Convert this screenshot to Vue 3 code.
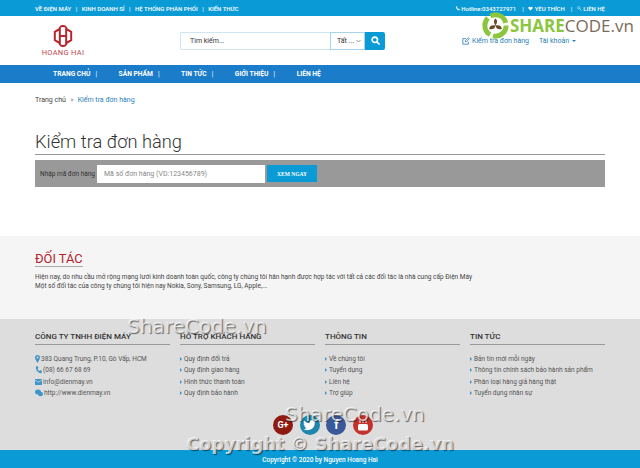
<template>
  <div class="page">
    <div class="topbar">
      <div class="wrap topbar-in">
        <div class="toplinks">
          <a v-for="(t, i) in topLeft" :key="t" :class="{ sep: i < topLeft.length - 1 }">{{ t }}</a>
        </div>
        <div class="toplinks right">
          <a class="sep">
            <svg class="ic" viewBox="0 0 10 10"><path d="M2 1l1.5-.5L5 3 4 4c.4 1 1 1.600 2 2l1-1 2.500 1.500L9 8c-.5 1-2 1-4-.5S1 3.500 2 1z" fill="#fff" /></svg>
            Hotline:0343727971
          </a>
          <a class="sep">
            <svg class="ic" viewBox="0 0 10 10"><path d="M5 9L1 5c-1-1.500 0-3.500 1.800-3.500C4 1.500 4.600 2 5 3c.4-1 1-1.500 2.200-1.500C9 1.500 10 3.500 9 5z" fill="#fff" /></svg>
            YÊU THÍCH
          </a>
          <a>
            <svg class="ic" viewBox="0 0 10 10"><circle cx="3.500" cy="3.500" r="2.500" fill="none" stroke="#fff" /><path d="M5 5l4 4M7 7l1-1" stroke="#fff" fill="none" /></svg>
            LIÊN HỆ
          </a>
        </div>
      </div>
    </div>

    <header class="wrap head">
      <div class="logo">
        <svg width="20" height="22" viewBox="0 0 22 24" fill="none" stroke="#b5262e" stroke-width="2.200">
          <path d="M7 4.500L2 7.500v9L7 19.500M15 4.500l5 3v9l-5 3M7.500 2v20M14.500 2v20M7.500 12h7M7.500 2L11 .8 14.500 2M7.500 22l3.500 1.200 3.500-1.200" />
        </svg>
        <span class="logo-name">HOANG HAI</span>
      </div>
      <div class="search">
        <div class="search-input">Tìm kiếm...</div>
        <div class="search-cat">
          Tất ...
          <svg width="5" height="4" viewBox="0 0 5 4"><path d="M.5 1l2 2 2-2" fill="none" stroke="#777" stroke-width=".8" /></svg>
        </div>
        <button class="search-btn">
          <svg width="9" height="9" viewBox="0 0 10 10" fill="none" stroke="#fff" stroke-width="1.800"><circle cx="4.200" cy="4.200" r="3" /><path d="M6.500 6.500L9.500 9.500" /></svg>
        </button>
      </div>
      <div class="account">
        <a>
          <svg width="8" height="8" viewBox="0 0 10 10" fill="none" stroke="#2a7fb8"><path d="M8 6v3H1V2h4" /><path d="M4 6l.3-1.500L8 1l1.200 1.200-3.500 3.500z" /></svg>
          Kiểm tra đơn hàng
        </a>
        <a>Tài khoản <i class="caret"></i></a>
      </div>
    </header>

    <nav class="nav">
      <div class="wrap nav-in">
        <a v-for="(t, i) in navItems" :key="t" :class="{ sep: i < navItems.length - 1 }">{{ t }}</a>
      </div>
    </nav>

    <main class="wrap main">
      <div class="crumb">Trang chủ <span class="gt">»</span> <span class="cur">Kiểm tra đơn hàng</span></div>
      <h1 class="title">Kiểm tra đơn hàng</h1>
      <div class="check">
        <label>Nhập mã đơn hàng</label>
        <div class="check-input">Mã số đơn hàng (VD:123456789)</div>
        <button class="check-btn">XEM NGAY</button>
      </div>
    </main>

    <section class="partner">
      <div class="wrap">
        <h2>ĐỐI TÁC</h2>
        <p>Hiện nay, do nhu cầu mở rộng mạng lưới kinh doanh toàn quốc, công ty chúng tôi hân hạnh được hợp tác với tất cả các đối tác là nhà cung cấp Điện Máy</p>
        <p>Một số đối tác của công ty chúng tôi hiện nay Nokia, Sony, Samsung, LG, Apple,...</p>
      </div>
    </section>

    <footer class="foot">
      <div class="wrap cols">
        <div class="col">
          <h3>CÔNG TY TNHH ĐIỆN MÁY</h3>
          <ul>
            <li v-for="c in contacts" :key="c.text">
              <svg class="cic" :width="c.w" height="8" :viewBox="`0 0 ${c.w} 8`" v-html="c.icon"></svg>{{ c.text }}
            </li>
          </ul>
        </div>
        <div v-for="col in linkCols" :key="col.title" class="col">
          <h3>{{ col.title }}</h3>
          <ul>
            <li v-for="l in col.links" :key="l"><i class="arrow"></i>{{ l }}</li>
          </ul>
        </div>
      </div>
      <div class="social">
        <span class="soc gp">G+</span>
        <span class="soc tw">
          <svg width="13" height="11" viewBox="0 0 13 11"><path d="M13 1.300c-.5.200-1 .4-1.500.4.500-.3 1-.8 1.200-1.400-.5.300-1 .5-1.700.7C10.500.4 9.800 0 9 0 7.300 0 6.100 1.500 6.500 3.200 4.300 3.100 2.300 2 1 .4.300 1.600.6 3.100 1.700 3.900c-.4 0-.8-.1-1.200-.3 0 1.200.9 2.300 2.100 2.600-.4.100-.8.100-1.200 0 .3 1 1.300 1.800 2.500 1.800C2.800 8.900 1.400 9.300 0 9.100 4 11.700 12 10 11.700 2.700c.5-.3 1-.8 1.300-1.400z" fill="#fff" /></svg>
        </span>
        <span class="soc fb">f</span>
        <span class="soc yt">
          <svg width="12" height="12" viewBox="0 0 12 12"><rect x="1" y="5" width="10" height="6.500" rx="1.500" fill="#fff" /><path d="M3 1v3M6 1v3M9 1v3" stroke="#fff" /></svg>
        </span>
      </div>
    </footer>
    <div class="copy">Copyright © 2020 by Nguyen Hoang Hai</div>

    <div class="sc-logo">
      <svg width="27" height="27" viewBox="0 0 38 38">
        <circle cx="19" cy="19" r="15" fill="none" stroke="#8cc63f" stroke-width="7" stroke-dasharray="27 4.400" />
        <path d="M19 9c3 2 3 6 0 10-3-4-3-8 0-10zM19 19c5-1 8 0 9 5-5 1-8 0-9-5zM19 19c-5-1-8 0-9 5 5 1 8 0 9-5z" fill="#6b4a2b" />
      </svg>
      <span class="sc-text"><b>SHARE</b>CODE.vn</span>
    </div>
    <div class="wm wm1">ShareCode.vn</div>
    <div class="wm wm2">ShareCode.vn</div>
    <div class="wm wm3">Copyright © ShareCode.vn</div>
  </div>
</template>

<script setup>
const topLeft = ['VỀ ĐIỆN MÁY', 'KINH DOANH SỈ', 'HỆ THỐNG PHÂN PHỐI', 'KIẾN THỨC']
const navItems = ['TRANG CHỦ', 'SẢN PHẨM', 'TIN TỨC', 'GIỚI THIỆU', 'LIÊN HỆ']

const contacts = [
  {
    text: '383 Quang Trung, P.10, Gò Vấp, HCM',
    w: 5,
    icon: '<path d="M2.500 0C1 0 0 1 0 2.500 0 4 2.500 8 2.500 8S5 4 5 2.500C5 1 4 0 2.500 0zm0 3.500a1 1 0 110-2 1 1 0 010 2z" fill="#3d95c9"/>'
  },
  {
    text: '(08) 66 67 68 69',
    w: 7,
    icon: '<path d="M1 .5L2.500 0l1 2-1 1c.4 1 1 1.500 2 2l1-1 1.500 1.200L6.500 7C4 8 0 4 1 .5z" fill="#3d95c9"/>'
  },
  {
    text: 'info@dienmay.vn',
    w: 7,
    icon: '<rect y="1" width="7" height="6" fill="#3d95c9"/><path d="M0 2l3.500 2.200L7 2" fill="none" stroke="#ddd" stroke-width=".7"/>'
  },
  {
    text: 'http://www.dienmay.vn',
    w: 8,
    icon: '<ellipse cx="3" cy="3" rx="3" ry="2.500" fill="#3d95c9"/><ellipse cx="5.500" cy="5" rx="2.500" ry="2.200" fill="#3d95c9"/>'
  }
]

const linkCols = [
  {
    title: 'HỖ TRỢ KHÁCH HÀNG',
    links: ['Quy định đổi trả', 'Quy định giao hàng', 'Hình thức thanh toán', 'Quy định bảo hành']
  },
  {
    title: 'THÔNG TIN',
    links: ['Về chúng tôi', 'Tuyển dụng', 'Liên hệ', 'Trợ giúp']
  },
  {
    title: 'TIN TỨC',
    links: [
      'Bản tin mới mỗi ngày',
      'Thông tin chính sách bảo hành sản phẩm',
      'Phân loại hàng giả hàng thật',
      'Tuyển dụng nhân sự'
    ]
  }
]
</script>

<style>
html,
body {
  margin: 0;
  background: #fff;
}
</style>

<style scoped>
* {
  box-sizing: border-box;
}

.page {
  position: relative;
  width: 640px;
  height: 468px;
  overflow: hidden;
  font-family: Roboto, "Liberation Sans", sans-serif;
  color: #333;
}

.wrap {
  width: 570px;
  margin: 0 auto;
}

.topbar {
  height: 16px;
  background: #0a9bd6;
}
.topbar-in {
  display: flex;
  justify-content: space-between;
  align-items: center;
  height: 16px;
}
.toplinks {
  display: flex;
  font-size: 6px;
  font-weight: 500;
  color: #fff;
  white-space: nowrap;
}
.toplinks a.sep::after {
  content: "|";
  margin: 0 4.500px;
}
.ic {
  width: 5px;
  height: 5px;
}

.head {
  display: flex;
  align-items: center;
  height: 49px;
}
.logo {
  width: 50px;
  display: flex;
  flex-direction: column;
  align-items: center;
  margin-left: 3px;
}
.logo-name {
  font-size: 7.500px;
  letter-spacing: 0.3px;
  color: #c0454b;
  margin-top: 1px;
  white-space: nowrap;
}
.search {
  display: flex;
  height: 18px;
  margin-left: 92px;
}
.search-input {
  width: 150px;
  border: 1px solid #cfe6f2;
  border-right: 0;
  border-radius: 2px 0 0 2px;
  font-size: 7px;
  line-height: 16px;
  padding-left: 9px;
}
.search-cat {
  width: 35px;
  border: 1px solid #a9d3e8;
  font-size: 7px;
  line-height: 16px;
  padding-left: 6px;
}
.search-btn {
  width: 20px;
  padding: 0;
  border: 0;
  background: #0a9bd6;
  border-radius: 0 2px 2px 0;
  display: flex;
  align-items: center;
  justify-content: center;
}
.account {
  display: flex;
  align-items: center;
  gap: 10px;
  margin-left: 77px;
  font-size: 7px;
  color: #2a7fb8;
  white-space: nowrap;
}
.account a {
  display: flex;
  align-items: center;
  gap: 2px;
}
.caret {
  display: inline-block;
  border: 2px solid transparent;
  border-top-color: #2a7fb8;
  border-bottom: 0;
  margin-left: 1px;
}

.nav {
  height: 18px;
  background: #1b7cc9;
}
.nav-in {
  display: flex;
  align-items: center;
  height: 18px;
  padding-left: 18px;
  font-size: 6.700px;
  font-weight: 700;
  color: #fff;
  white-space: nowrap;
}
.nav-in a.sep::after {
  content: "|";
  margin: 0 0 0 5px;
  font-weight: 400;
}
.nav-in a {
  margin-right: 21.500px;
}

.main {
  height: 153px;
}
.crumb {
  padding-top: 12px;
  font-size: 7px;
  line-height: 10px;
  color: #444;
}
.gt {
  margin: 0 2.500px;
  color: #888;
}
.cur {
  color: #2a7fb8;
}
.title {
  margin: 24px 0 0;
  height: 26px;
  font-size: 18.300px;
  font-weight: 300;
  line-height: 25px;
  color: #333;
  border-bottom: 1px solid #999;
}
.check {
  display: flex;
  align-items: center;
  height: 27px;
  margin-top: 5px;
  background: #999;
  padding-left: 5px;
}
.check label {
  font-size: 6.500px;
  color: #333;
  width: 57px;
  white-space: nowrap;
}
.check-input {
  width: 168px;
  height: 18px;
  background: #fff;
  font-size: 7px;
  line-height: 18px;
  padding-left: 7px;
  color: #888;
}
.check-btn {
  width: 50px;
  height: 17px;
  margin-left: 2px;
  padding: 0;
  border: 0;
  background: #0a9bd6;
  color: #fff;
  font-family: "Liberation Serif", serif;
  font-size: 5.500px;
  font-weight: 700;
}

.partner {
  height: 83px;
  background: #f5f5f5;
  padding-top: 12px;
}
.partner h2 {
  display: inline-block;
  margin: 0 0 6px;
  font-size: 12.800px;
  font-weight: 400;
  line-height: 15px;
  color: #b3202a;
  border-bottom: 1px solid #aaa;
}
.partner p {
  margin: 0;
  font-size: 6.500px;
  line-height: 9px;
  color: #444;
}

.foot {
  position: relative;
  height: 131px;
  background: #ddd;
}
.cols {
  display: grid;
  grid-template-columns: repeat(4, 135px);
  column-gap: 10px;
  padding-top: 13px;
}
.col h3 {
  margin: 0 0 8px;
  height: 13px;
  font-size: 8px;
  font-weight: 500;
  line-height: 10px;
  color: #333;
  border-bottom: 1px solid #999;
  white-space: nowrap;
}
.col ul {
  margin: 0;
  padding: 0;
  list-style: none;
}
.col li {
  display: flex;
  align-items: center;
  height: 11.500px;
  font-size: 6.500px;
  color: #555;
  white-space: nowrap;
}
.cic {
  margin-right: 1px;
}
.arrow {
  border: 2px solid transparent;
  border-left: 2px solid #3d95c9;
  border-right: 0;
  margin-right: 2px;
}
.social {
  position: absolute;
  left: 273px;
  top: 96px;
  display: flex;
  gap: 6.700px;
}
.soc {
  width: 20px;
  height: 20px;
  border-radius: 50%;
  display: flex;
  align-items: center;
  justify-content: center;
  color: #fff;
  font-size: 9px;
  font-weight: 700;
}
.gp {
  background: #8e1a12;
}
.tw {
  background: #1f86ad;
}
.fb {
  background: #3b5998;
  font-size: 12px;
}
.yt {
  background: #c4302b;
}

.copy {
  height: 18px;
  background: #0a9bd6;
  color: #fff;
  font-size: 6.500px;
  font-weight: 500;
  line-height: 20px;
  text-align: center;
}

.sc-logo {
  position: absolute;
  left: 482px;
  top: 12px;
  display: flex;
  align-items: center;
}
.sc-text {
  font-size: 17px;
  line-height: 27px;
  color: #7a6a58;
  margin-left: 1px;
  font-family: "Open Sans", sans-serif;
  white-space: nowrap;
}
.sc-text b {
  color: #8cc63f;
  font-weight: 700;
}

.wm {
  position: absolute;
  font-family: "DejaVu Sans", sans-serif;
  white-space: nowrap;
  color: rgba(255, 255, 255, 0.7);
  text-shadow: 1px 1px 1px rgba(0, 0, 0, 0.55);
}
.wm1 {
  left: 127px;
  top: 314px;
  font-size: 20px;
}
.wm2 {
  left: 285px;
  top: 402px;
  font-size: 20px;
}
.wm3 {
  left: 186px;
  top: 433px;
  font-size: 17.800px;
  font-weight: 700;
}
</style>
